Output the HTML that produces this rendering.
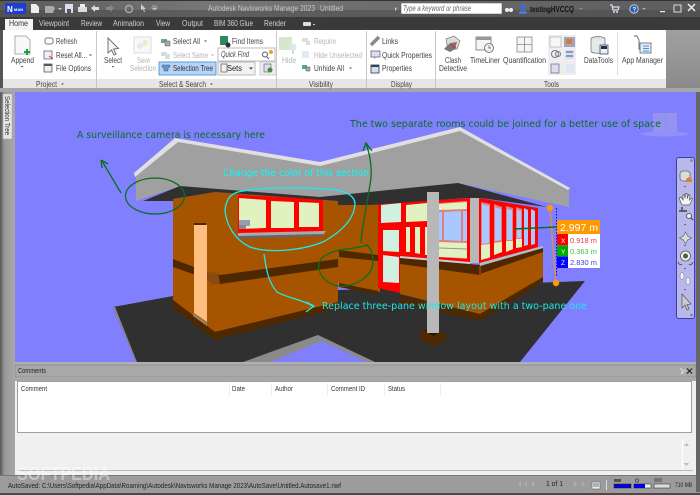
<!DOCTYPE html>
<html><head><meta charset="utf-8"><title>Navisworks</title>
<style>
html,body{margin:0;padding:0;width:700px;height:495px;overflow:hidden;background:#999}
svg{display:block;filter:blur(.3px)}
text{font-family:"Liberation Sans",sans-serif;font-size:8px;fill:#333}
.t{fill:#444}
.g{fill:#b4b4b4}
.a{font-family:"DejaVu Sans",sans-serif;font-size:10px}
.h{fill:#d0d0d0}
</style></head><body>
<svg width="700" height="495" viewBox="0 0 700 495" xmlns="http://www.w3.org/2000/svg">
<defs>
<linearGradient id="tb2" x1="0" y1="0" x2="1" y2="0"><stop offset="0" stop-color="#5a5a5a"/><stop offset=".3" stop-color="#777"/><stop offset="1" stop-color="#5c5c5c"/></linearGradient>
<linearGradient id="lf" x1="0" y1="0" x2="1" y2="0"><stop offset="0" stop-color="#555"/><stop offset=".3" stop-color="#999"/><stop offset="1" stop-color="#a8a8a8"/></linearGradient>
<linearGradient id="rt" x1="0" y1="0" x2="0" y2="1"><stop offset="0" stop-color="#a0a0a0"/><stop offset="1" stop-color="#8a8a8a"/></linearGradient>
</defs>

<!-- chrome -->
<rect width="700" height="495" fill="#9c9c9c"/>
<rect width="700" height="18" fill="url(#tb2)"/>
<rect y="10" width="700" height="8" fill="#4a4a4a" opacity=".55"/>
<rect y="17" width="700" height="13" fill="#3a3a3a"/>
<rect x="0" y="0" width="700" height="1" fill="#333"/>

<!-- app button -->
<rect x="5" y="3" width="21" height="11" fill="#1c3fd0"/>
<text x="7" y="12" style="font-size:8px;font-weight:bold;fill:#fff">N</text>
<text x="14" y="11" style="font-size:4px;font-weight:bold;fill:#fff">MAN</text>
<!-- QAT -->
<path d="M31 4h5l3 3v6h-8z" fill="#eee"/>
<path d="M45 6h8l2 2-2 5h-8z" fill="#aaa"/>
<path d="M58 8l2 2 2-2z" fill="#ccc"/>
<rect x="65" y="4" width="8" height="9" fill="#dde"/><rect x="67" y="9" width="4" height="4" fill="#556"/>
<rect x="78" y="7" width="9" height="5" fill="#ddd"/><rect x="80" y="4" width="5" height="3" fill="#eee"/>
<path d="M91 8l4-3v2h4v3h-4v2z" fill="#ddd"/>
<path d="M114 8l-4-3v2h-4v3h4v2z" fill="#888"/>
<circle cx="129" cy="9" r="3.5" fill="none" stroke="#aaa" stroke-width="1.4"/>
<path d="M141 4l5 5-2 0 1 3-1 0-1-3-2 1z" fill="#ccc"/>
<path d="M152 6h5M152 8l2.5 2 2.5-2z" stroke="#bbb" fill="#bbb" stroke-width=".8"/>
<text x="208" y="11" style="fill:#c6c6c6" textLength="107" lengthAdjust="spacingAndGlyphs">Autodesk Navisworks Manage 2023</text>
<text x="320" y="11" style="fill:#c6c6c6" textLength="23" lengthAdjust="spacingAndGlyphs">Untitled</text>
<path d="M395 7l2 2-2 2z" fill="#ccc"/>
<rect x="401" y="3" width="101" height="11" fill="#fff" stroke="#555" stroke-width=".5"/>
<text x="403" y="11" style="font-style:italic;fill:#666" textLength="68" lengthAdjust="spacingAndGlyphs">Type a keyword or phrase</text>
<circle cx="507" cy="10" r="2" fill="#eee"/><circle cx="511" cy="10" r="2" fill="#eee"/>
<circle cx="523" cy="6.5" r="2.5" fill="#3c6cdc"/><path d="M519 13c0-4 8-4 8 0z" fill="#3c6cdc"/><rect x="519" y="12.5" width="8" height="1" fill="#6a90e0"/>
<text x="530" y="12" style="fill:#111;font-weight:bold" textLength="44" lengthAdjust="spacingAndGlyphs">testingHVCCQ</text>
<path d="M579 8l2 2 2-2z" fill="#888"/>
<path d="M610 5h2l1 5h5l1-3h-6" fill="none" stroke="#dde" stroke-width="1.2"/><circle cx="614" cy="12" r="1" fill="#dde"/><circle cx="617" cy="12" r="1" fill="#dde"/>
<circle cx="634" cy="9" r="4.2" fill="#2a5cb8" stroke="#ddd" stroke-width=".8"/><text x="632.5" y="11.5" style="font-size:6px;font-weight:bold;fill:#fff">?</text>
<path d="M642 8l2 2 2-2z" fill="#aaa"/>
<rect x="660" y="11" width="5" height="1.2" fill="#eee"/>
<rect x="674" y="5" width="7" height="7" fill="none" stroke="#ddd" stroke-width="1"/>
<path d="M688 4l7 7M695 4l-7 7" stroke="#eee" stroke-width="1.5"/>

<!-- tabs -->
<path d="M5 30v-11h28v11z" fill="#f4f4f4"/>
<text x="9" y="26" textLength="19" lengthAdjust="spacingAndGlyphs">Home</text>
<text x="39" y="26" class="h" textLength="30" lengthAdjust="spacingAndGlyphs">Viewpoint</text>
<text x="81" y="26" class="h" textLength="21" lengthAdjust="spacingAndGlyphs">Review</text>
<text x="113" y="26" class="h" textLength="31" lengthAdjust="spacingAndGlyphs">Animation</text>
<text x="156" y="26" class="h" textLength="14" lengthAdjust="spacingAndGlyphs">View</text>
<text x="182" y="26" class="h" textLength="21" lengthAdjust="spacingAndGlyphs">Output</text>
<text x="214" y="26" class="h" textLength="39" lengthAdjust="spacingAndGlyphs">BIM 360 Glue</text>
<text x="264" y="26" class="h" textLength="22" lengthAdjust="spacingAndGlyphs">Render</text>
<rect x="303" y="22" width="8" height="4" rx="1" fill="#ddd"/><rect x="313" y="24" width="2" height="1" fill="#ccc"/>

<!-- ribbon -->
<rect x="2" y="30" width="664" height="50" fill="#fff"/>
<rect x="2" y="79" width="664" height="9" fill="#e6e6e6"/>
<rect x="666" y="30" width="34" height="58" fill="url(#rt)"/>
<rect x="0" y="30" width="3" height="62" fill="#555"/>
<rect x="0" y="88" width="700" height="4" fill="#a6a6a6"/>
<g fill="#c8c8c8"><rect x="96" y="31" width="1" height="57"/><rect x="276" y="31" width="1" height="57"/><rect x="366" y="31" width="1" height="57"/><rect x="435" y="31" width="1" height="57"/></g>

<!-- Project group -->
<path d="M15 36h11l4 4v14H15z" fill="#f8f8f8" stroke="#999" stroke-width=".8"/>
<path d="M26 49h2v2h2v2h-2v2h-2v-2h-2v-2h2z" fill="#18a030"/>
<text x="11" y="63" class="t" textLength="23" lengthAdjust="spacingAndGlyphs">Append</text>
<path d="M20.5 66l1.5 1.5 1.5-1.5z" fill="#555"/>
<rect x="45" y="38" width="8" height="6" rx="2" fill="none" stroke="#778" stroke-width="1"/>
<text x="56" y="44" class="t" textLength="21" lengthAdjust="spacingAndGlyphs">Refresh</text>
<rect x="44" y="51" width="8" height="8" fill="#eef" stroke="#667" stroke-width=".8"/><path d="M49 56l4 3" stroke="#c33"/>
<text x="56" y="58" class="t" textLength="31" lengthAdjust="spacingAndGlyphs">Reset All...</text>
<path d="M89 54.5l1.5 1.5 1.5-1.5z" fill="#555"/>
<rect x="44" y="64" width="8" height="8" fill="#eee" stroke="#556" stroke-width=".8"/><rect x="44" y="64" width="8" height="2" fill="#556"/>
<text x="56" y="71" class="t" textLength="35" lengthAdjust="spacingAndGlyphs">File Options</text>
<text x="36" y="87" class="t" textLength="21" lengthAdjust="spacingAndGlyphs">Project</text>
<path d="M61 83.5l1.5 1.5 1.5-1.5z" fill="#555"/>

<!-- Select & Search -->
<path d="M108 38l0 15 3.5-3 2.5 5 2-1-2.5-5 5-.5z" fill="#f5f5f5" stroke="#667" stroke-width=".9"/>
<text x="104" y="63" class="t" textLength="18" lengthAdjust="spacingAndGlyphs">Select</text>
<path d="M111.5 66l1.5 1.5 1.5-1.5z" fill="#555"/>
<rect x="134" y="37" width="17" height="16" fill="#f8f8f8" stroke="#ddd"/><circle cx="145" cy="43" r="3" fill="#f5e8c8"/><circle cx="140" cy="46" r="3" fill="#e8e8e8"/>
<text x="137" y="63" class="g" textLength="13" lengthAdjust="spacingAndGlyphs">Save</text>
<text x="130" y="71" class="g" textLength="26" lengthAdjust="spacingAndGlyphs">Selection</text>
<path d="M161 39h6v4h-6z" fill="#6a8"/><path d="M165 41h5v5h-5z" fill="#aaa" stroke="#555" stroke-width=".5"/>
<text x="173" y="44" class="t" textLength="27" lengthAdjust="spacingAndGlyphs">Select All</text>
<path d="M204 40.5l1.5 1.5 1.5-1.5z" fill="#555"/>
<path d="M161 52h6v4h-6z" fill="#cdd"/><path d="M165 54h5v5h-5z" fill="#ddd"/>
<text x="173" y="58" class="g" textLength="35" lengthAdjust="spacingAndGlyphs">Select Same</text>
<path d="M211 54.5l1.5 1.5 1.5-1.5z" fill="#aaa"/>
<rect x="159" y="62" width="57" height="13" fill="#b8d4f2" stroke="#5a9ce0"/>
<path d="M162 65h8v2l-2 1v3h-4v-3l-2-1z" fill="#5f9ad0" stroke="#346" stroke-width=".4"/>
<text x="173" y="71" style="fill:#234" textLength="40" lengthAdjust="spacingAndGlyphs">Selection Tree</text>
<rect x="220" y="36" width="8" height="9" fill="#2d8a5a"/><circle cx="228" cy="45" r="2.5" fill="#234"/>
<text x="232" y="44" class="t" textLength="31" lengthAdjust="spacingAndGlyphs">Find Items</text>
<rect x="218" y="48" width="57" height="13" fill="#fff" stroke="#bbb"/>
<text x="221" y="57" style="font-style:italic;fill:#444" textLength="28" lengthAdjust="spacingAndGlyphs">Quick Find</text>
<circle cx="265" cy="54.5" r="2.5" fill="none" stroke="#556"/><path d="M267 57l2 2" stroke="#556"/><circle cx="271" cy="52" r="2" fill="#f0a020"/>
<rect x="218" y="62" width="37" height="13" fill="#f2f2f2" stroke="#bbb"/>
<rect x="221" y="64" width="6" height="8" fill="none" stroke="#555" stroke-width=".7"/>
<text x="227" y="71" style="fill:#222" textLength="15" lengthAdjust="spacingAndGlyphs">Sets</text>
<path d="M249 67.5l2 2 2-2z" fill="#333"/>
<rect x="260" y="62" width="16" height="13" fill="#eee" stroke="#ccc"/>
<rect x="264" y="64" width="7" height="8" fill="#dde" stroke="#556" stroke-width=".6"/><circle cx="270" cy="70" r="2.5" fill="#4a8c3f"/>
<text x="159" y="87" class="t" textLength="47" lengthAdjust="spacingAndGlyphs">Select &amp; Search</text>
<path d="M210 83.5l1.5 1.5 1.5-1.5z" fill="#555"/>

<!-- Visibility -->
<rect x="279" y="37" width="13" height="13" fill="#d8e6cc"/><circle cx="293" cy="47" r="3.5" fill="#dde8f2"/><rect x="292" y="50" width="2" height="4" fill="#cdd"/>
<text x="282" y="63" class="g" textLength="14" lengthAdjust="spacingAndGlyphs">Hide</text>
<path d="M302 38h6v4h-6z" fill="#d6e4cc"/><path d="M306 41h4v4h-4z" fill="#ddd"/>
<text x="314" y="44" class="g" textLength="22" lengthAdjust="spacingAndGlyphs">Require</text>
<path d="M302 51h7v7h-7z" fill="#e0eaf4"/>
<text x="314" y="58" class="g" textLength="48" lengthAdjust="spacingAndGlyphs">Hide Unselected</text>
<path d="M302 65h5v4h-5z" fill="#5a8"/><path d="M306 67h4v4h-4z" fill="#aaa" stroke="#555" stroke-width=".5"/>
<text x="314" y="71" class="t" textLength="30" lengthAdjust="spacingAndGlyphs">Unhide All</text>
<path d="M349 67.5l1.5 1.5 1.5-1.5z" fill="#555"/>
<text x="309" y="87" class="t" textLength="24" lengthAdjust="spacingAndGlyphs">Visibility</text>

<!-- Display -->
<path d="M371 45l8-8" stroke="#8a8a8a" stroke-width="3.5"/>
<text x="382" y="44" class="t" textLength="16" lengthAdjust="spacingAndGlyphs">Links</text>
<rect x="371" y="51" width="9" height="6" fill="#dde" stroke="#667" stroke-width=".8"/><path d="M374 57v2l2-2" fill="#889"/>
<text x="382" y="58" class="t" textLength="50" lengthAdjust="spacingAndGlyphs">Quick Properties</text>
<rect x="371" y="65" width="8" height="8" fill="#cfe0f4" stroke="#334" stroke-width=".8"/><rect x="371" y="65" width="8" height="2" fill="#345"/>
<text x="382" y="71" class="t" textLength="30" lengthAdjust="spacingAndGlyphs">Properties</text>
<text x="391" y="87" class="t" textLength="21" lengthAdjust="spacingAndGlyphs">Display</text>

<!-- Tools -->
<path d="M446 39l8-3 6 5-3 8-9 1z" fill="#ddd" stroke="#777" stroke-width=".7"/>
<path d="M444 49l6-6 7-1-2 7-5 3z" fill="#777"/><path d="M451 45l5 3" stroke="#d33" stroke-width="1.5"/>
<text x="445" y="63" class="t" textLength="16" lengthAdjust="spacingAndGlyphs">Clash</text>
<text x="439" y="71" class="t" textLength="28" lengthAdjust="spacingAndGlyphs">Detective</text>
<rect x="476" y="37" width="15" height="13" fill="#f4f4f4" stroke="#777" stroke-width=".8"/><rect x="476" y="37" width="15" height="3" fill="#999"/>
<circle cx="489" cy="48" r="4.5" fill="#eee" stroke="#666" stroke-width=".8"/>
<path d="M489 45.5V48h2" stroke="#555" fill="none" stroke-width=".7"/>
<text x="470" y="63" class="t" textLength="30" lengthAdjust="spacingAndGlyphs">TimeLiner</text>
<rect x="517" y="37" width="15" height="15" fill="#f5f5f5" stroke="#888" stroke-width=".8"/><path d="M524.5 37v15M517 44.5h15" stroke="#888" stroke-width=".8"/>
<text x="503" y="63" class="t" textLength="43" lengthAdjust="spacingAndGlyphs">Quantification</text>
<rect x="548" y="35" width="28" height="40" fill="#eee"/>
<rect x="550" y="37" width="11" height="10" fill="#f6f6f6" stroke="#99a" stroke-width=".5"/><rect x="564" y="37" width="11" height="10" fill="#a4a4b8"/><rect x="566" y="39" width="6" height="5" fill="#d87a40"/>
<circle cx="555" cy="54" r="3.5" fill="none" stroke="#778"/><circle cx="558" cy="54" r="2.5" fill="none" stroke="#778"/>
<rect x="565" y="50" width="9" height="9" fill="#dde"/><path d="M566 52h7M566 56h7" stroke="#245ab0"/>
<rect x="551" y="64" width="8" height="9" fill="#dde" stroke="#667" stroke-width=".7"/><rect x="566" y="64" width="8" height="9" fill="#dfe8f2"/>
<ellipse cx="598" cy="39" rx="7" ry="2.5" fill="#ddd" stroke="#667" stroke-width=".7"/>
<path d="M591 39v12c0 3 14 3 14 0V39" fill="#e8e8e8" stroke="#667" stroke-width=".7"/>
<rect x="600" y="45" width="8" height="9" fill="#e8eef4" stroke="#234" stroke-width=".7"/><rect x="601" y="46" width="6" height="3" fill="#234"/>
<text x="584" y="63" class="t" textLength="29" lengthAdjust="spacingAndGlyphs">DataTools</text>
<rect x="617" y="32" width="1" height="43" fill="#ddd"/>
<path d="M634 36h3l2 4v9h11" fill="none" stroke="#667" stroke-width=".9"/>
<rect x="640" y="43" width="11" height="10" fill="#e4eef8" stroke="#567" stroke-width=".8"/>
<path d="M643 46h6M643 48.5h6M643 51h6" stroke="#2a6cc0" stroke-width=".8"/>
<text x="622" y="63" class="t" textLength="41" lengthAdjust="spacingAndGlyphs">App Manager</text>
<text x="544" y="87" class="t" textLength="15" lengthAdjust="spacingAndGlyphs">Tools</text>

<!-- side panel -->
<rect x="0" y="92" width="15" height="273" fill="url(#lf)"/>
<rect x="696" y="92" width="4" height="400" fill="#666"/>
<rect x="3" y="94" width="9" height="45" fill="#e4e4e4" stroke="#aaa" stroke-width=".5"/>
<text transform="translate(5,96) rotate(90)" style="font-size:7px;fill:#333" textLength="39" lengthAdjust="spacingAndGlyphs">Selection Tree</text>

<!-- viewport -->
<rect x="15" y="92" width="681" height="270" fill="#8080ff"/>

<!-- viewcube (sits beneath the annotation text) -->
<rect x="653" y="113" width="24" height="20" fill="#9494f0"/>
<rect x="665" y="113" width="1" height="20" fill="#8a8af8"/>
<ellipse cx="665" cy="134" rx="24" ry="2.5" fill="#9090f8"/>

<!-- floor -->
<polygon points="113,307 173,296 585,281 520,362 136,362" fill="#303030"/>
<polygon points="243,362 318,335 375,362" fill="#8a8a8a"/>
<polygon points="270,362 322,341 367,362" fill="#8080ff"/>
<polygon points="113,307 136,362 137,362 115,307" fill="#8a8a8a"/>

<!-- left building -->
<polygon points="173,199 215,192 338,201 338,302 215,332 173,300" fill="#a65400"/>
<polygon points="173,300 215,332 338,302 338,308 215,340 173,308" fill="#4d2800"/>
<polygon points="173,259 207,272 220,275 338,259 338,267 220,284 207,279 173,267" fill="#4d2800"/>
<polygon points="207,272 218,273 220,283 213,285 207,280" fill="#8a4a10"/>
<polygon points="194,223 206,223 206,226 194,226" fill="#4d2800"/>
<polygon points="194,225 207,225 207,322 194,313" fill="#ffbf80"/>
<polygon points="193,313 207,323 207,326 193,316" fill="#a08060"/>
<polygon points="238,195 323,199 323,231 238,233" fill="#f00"/>
<polygon points="239,198 266,200 266,228 239,229" fill="#e0f2bf"/>
<polygon points="271,201 294,202 294,228 271,228" fill="#e0f2bf"/>
<polygon points="299,202 319,203 319,227 299,227" fill="#e0f2bf"/>
<rect x="239" y="220" width="11" height="6" fill="#9a9ab0"/><rect x="239" y="225" width="7" height="4" fill="#888"/>
<polygon points="238,233 326,231 323,235 238,238" fill="#aaa"/>
<polygon points="238,236 323,234 323,236 238,239" fill="#666"/>

<!-- right wing wall -->
<polygon points="338,205 380,203 380,292 338,283" fill="#a65400"/>
<polygon points="339,250 378,255 378,261 339,257" fill="#4d2800"/>
<polygon points="339,283 378,291 378,295 339,287" fill="#4d2800"/>

<!-- right building lower -->
<polygon points="400,258 480,265 543,248 543,277 480,314 400,294" fill="#a65400"/>
<polygon points="400,296 480,314 543,277 543,282 480,321 400,303" fill="#4d2800"/>
<!-- glass frames -->
<polygon points="378,204 470,198 470,263 400,257 400,293 378,288" fill="#f00"/>
<polygon points="479,198 538,208 538,247 479,263" fill="#f00"/>
<polygon points="381,205 401,203 401,222 381,223" fill="#d0f0e0"/>
<polygon points="383,230 399,230 399,252 383,251" fill="#d0f0e0"/>
<polygon points="383,255 399,257 399,283 383,282" fill="#d0f0e0"/>
<polygon points="406,205 427,203 427,221 406,222" fill="#e0f2bf"/>
<polygon points="406,227 410,227 410,252 406,252" fill="#e0f2bf"/>
<polygon points="415,227 420,227 420,254 415,253" fill="#e0f2bf"/>
<polygon points="425,227 428,227 428,255 425,255" fill="#e0f2bf"/>
<polygon points="439,203 467,201 467,259 439,257" fill="#e08080"/>
<polygon points="439,204 467,202 467,209 439,210" fill="#e0f2bf"/>
<polygon points="444,212 461,211 461,241 444,240" fill="#a8c8ff"/>
<polygon points="439,212 442,212 442,240 439,240" fill="#a8c8ff"/>
<polygon points="463,211 467,211 467,241 463,241" fill="#a8c8ff"/>
<polygon points="439,242 467,243 467,258 439,257" fill="#e0f2bf"/>
<path d="M439 248l28 1" stroke="#999" stroke-width="1"/>
<!-- side panes -->
<polygon points="481,202 490,204 490,258 481,260" fill="#e08080"/>
<polygon points="482,204 489,206 489,243 482,244" fill="#a8c8ff"/>
<polygon points="481,245 490,244 490,257 481,260" fill="#e0f2bf"/>
<polygon points="494,204 502,207 502,252 494,255" fill="#e08080"/>
<polygon points="495,207 501,209 501,240 495,241" fill="#a8c8ff"/>
<polygon points="494,243 502,242 502,252 494,255" fill="#e0f2bf"/>
<polygon points="506,206 513,208 513,249 506,252" fill="#e08080"/>
<polygon points="507,209 512,210 512,240 507,240" fill="#a8c8ff"/>
<polygon points="506,241 513,241 513,249 506,252" fill="#e0f2bf"/>
<polygon points="516,207 522,209 522,247 516,248" fill="#e08080"/>
<polygon points="517,210 521,211 521,238 517,238" fill="#a8c8ff"/>
<polygon points="516,239 522,239 522,247 516,248" fill="#e0f2bf"/>
<polygon points="524,208 528,210 528,245 524,246" fill="#a8c8ff"/>
<polygon points="531,209 535,211 535,244 531,245" fill="#a8c8ff"/>
<!-- lower band -->
<polygon points="400,258 480,265 543,248 543,252 480,274 480,275 400,264" fill="#4d2800"/>
<polygon points="480,263 543,246 543,248 480,266" fill="#bbb"/>
<polygon points="400,256 470,262 470,264 400,258" fill="#ccc"/>
<polygon points="479,266 481,266 481,275 479,275" fill="#804010"/>

<!-- roof -->
<polygon points="136,176 177,141 320,165 460,130 569,190 569,207 458,183 320,197 180,186 136,201" fill="#a0a0a0"/>
<polygon points="134,173 175,138 320,162 460,127 570,188 568,190 460,131 320,166 178,142 135,177" fill="#e0e0e0"/>
<polygon points="143,201 180,186 320,197 458,183 547,207 480,198 467,198 370,205 338,205 338,201 215,192 173,199 173,201" fill="#303030"/>

<!-- columns -->
<polygon points="420,330 446,333 446,340 433,346 420,340" fill="#4d2800"/>
<polygon points="424,330 441,332 433,336" fill="#2a1500"/>
<rect x="427" y="192" width="12" height="141" fill="#b8b8b8"/>
<rect x="470" y="198" width="9" height="65" fill="#b8b8b8"/>

<!-- measurement -->
<path d="M550 208Q553 250 556 283" fill="none" stroke="#e09040" stroke-width="1.3"/>
<path d="M556.5 208V277" stroke="#00f" stroke-width="1" stroke-dasharray="1.5 1.5"/>
<path d="M514 229L557 227" stroke="#0a6e1e" stroke-width="1.5"/>
<circle cx="550" cy="208" r="3.2" fill="#f90"/>
<circle cx="556" cy="283" r="3.2" fill="#f90"/>
<rect x="557" y="220" width="43" height="14" fill="#f90"/>
<text x="560" y="231" style="font-size:10.5px;fill:#fff" textLength="38" lengthAdjust="spacingAndGlyphs">2.997 m</text>
<rect x="557" y="234" width="43" height="34" fill="#fff"/>
<rect x="557" y="234" width="11" height="11.3" fill="#f00"/>
<rect x="557" y="245.3" width="11" height="11.3" fill="#0a0"/>
<rect x="557" y="256.6" width="11" height="11.4" fill="#00f"/>
<text x="561" y="243" style="font-size:6.5px;fill:#fff">X</text>
<text x="561" y="254" style="font-size:6.5px;fill:#fff">Y</text>
<text x="561" y="265" style="font-size:6.5px;fill:#fff">Z</text>
<text x="570" y="243" style="font-size:7.5px;fill:#e04040" textLength="27" lengthAdjust="spacingAndGlyphs">0.918 m</text>
<text x="570" y="254" style="font-size:7.5px;fill:#40c040" textLength="27" lengthAdjust="spacingAndGlyphs">0.363 m</text>
<text x="570" y="265" style="font-size:7.5px;fill:#4040e0" textLength="27" lengthAdjust="spacingAndGlyphs">2.830 m</text>

<!-- annotations -->
<text x="77" y="138" class="a" style="fill:#0a6e1e" textLength="188" lengthAdjust="spacingAndGlyphs">A surveillance camera is necessary here</text>
<text x="350" y="127" class="a" style="fill:#0a6e1e" textLength="311" lengthAdjust="spacingAndGlyphs">The two separate rooms could be joined for a better use of space</text>
<text x="223" y="176" class="a" style="fill:#0ff" textLength="146" lengthAdjust="spacingAndGlyphs">Change the color of this section</text>
<text x="322" y="309" class="a" style="fill:#1ee8e8" textLength="265" lengthAdjust="spacingAndGlyphs">Replace three-pane window layout with a two-pane one</text>
<ellipse cx="155" cy="196" rx="29.5" ry="18" fill="none" stroke="#0a6e1e" stroke-width="1.3"/>
<path d="M121 193L102 161M101 160l1 8M101 160l7 4" fill="none" stroke="#0a6e1e" stroke-width="1.3"/>
<path d="M225 210C226 200 230 194 238 192C258 187 300 187 325 189C345 190 354 195 355 203C355 215 347 228 325 241C305 250 270 254 250 247C235 240 226 225 225 210Z" fill="none" stroke="#1ee8e8" stroke-width="1.3"/>
<path d="M264 254C266 268 268 282 277 292C285 297 300 299 313 306M306 302l8 4-8 6" fill="none" stroke="#1ee8e8" stroke-width="1.3"/>
<path d="M367 245C372 250 374 258 372 268C368 278 358 284 345 286C332 287 322 280 319 270C317 260 323 254 340 250C350 248 360 248 367 245Z" fill="none" stroke="#0a6e1e" stroke-width="1.3"/>
<path d="M361 243C362 225 368 200 371 178C372 165 369 152 366 143M363 151l3-8 6 8" fill="none" stroke="#0a6e1e" stroke-width="1.3"/>

<!-- nav bar -->
<rect x="676.5" y="157.5" width="18" height="161" rx="2.5" fill="#b8b8ec" stroke="#404090"/>
<circle cx="691.5" cy="160.5" r="1.5" fill="#889"/>
<circle cx="691.5" cy="315" r="1.5" fill="#889"/>
<rect x="680" y="171" width="10" height="10" rx="3" fill="#ddd" stroke="#666" stroke-width=".8"/>
<path d="M686 179l3-2 3 2v3h-6z" fill="#d9803a"/>
<path d="M684 186l1 1.5 1-1.5z" fill="#445"/>
<path d="M682 205l-3-7 2-1 2 3v-5l1.5-.5.5 4 .5-5 1.5 0 .5 5 1-4 1.5.5-.5 5 2-2 1 1-3 6z" fill="#f4f4f4" stroke="#555" stroke-width=".7"/>
<path d="M679 211h8M682 207v3" stroke="#444" stroke-width="1.5"/>
<circle cx="689" cy="216" r="2.5" fill="#eee" stroke="#444" stroke-width=".8"/><path d="M691 218l2 2" stroke="#333"/>
<path d="M684 224l1 1.5 1-1.5z" fill="#445"/>
<path d="M685.5 232l2 4 4 2-4 2-2 4-2-4-4-2 4-2z" fill="#ddd" stroke="#667" stroke-width=".7"/>
<path d="M684 245l1 1.5 1-1.5z" fill="#445"/>
<circle cx="685.5" cy="256" r="5" fill="#f0f0f0" stroke="#556" stroke-width=".8"/>
<circle cx="685.5" cy="256" r="2.5" fill="#3a6a3a"/>
<path d="M678 262c1 3 3 3 4 2M693 262c-1 3-3 3-4 2" fill="none" stroke="#556"/>
<path d="M684 268l1 1.5 1-1.5z" fill="#445"/>
<ellipse cx="682" cy="276" rx="2" ry="3.5" fill="#f4f4f4" stroke="#667" stroke-width=".5"/>
<ellipse cx="688" cy="281" rx="2" ry="3.5" fill="#f4f4f4" stroke="#667" stroke-width=".5"/>
<path d="M684 289l1 1.5 1-1.5z" fill="#445"/>
<path d="M682 294v14l3-3 2 5 2-1-2-4.5 4-.5z" fill="#ccc" stroke="#555" stroke-width=".7"/>

<!-- bottom -->
<rect x="15" y="362" width="681" height="3" fill="#b0b0b0"/>
<rect x="15" y="365" width="681" height="12" fill="#a8a8a8" stroke="#777" stroke-width=".5"/>
<text x="18" y="373" style="fill:#222;font-size:7.5px" textLength="28" lengthAdjust="spacingAndGlyphs">Comments</text>
<rect x="15" y="377" width="681" height="99" fill="#f0f0f0"/>
<rect x="15" y="377" width="681" height="4" fill="#a8a8a8"/>
<rect x="17.5" y="381.5" width="674" height="51" fill="#fff" stroke="#a0a0a0"/>
<g fill="#eee"><rect x="229" y="383" width="1" height="13"/><rect x="271" y="383" width="1" height="13"/><rect x="327" y="383" width="1" height="13"/><rect x="384" y="383" width="1" height="13"/><rect x="440" y="383" width="1" height="13"/></g>
<text x="21" y="391" style="font-size:7.5px" textLength="26" lengthAdjust="spacingAndGlyphs">Comment</text>
<text x="232" y="391" style="font-size:7.5px" textLength="13" lengthAdjust="spacingAndGlyphs">Date</text>
<text x="275" y="391" style="font-size:7.5px" textLength="18" lengthAdjust="spacingAndGlyphs">Author</text>
<text x="331" y="391" style="font-size:7.5px" textLength="34" lengthAdjust="spacingAndGlyphs">Comment ID</text>
<text x="388" y="391" style="font-size:7.5px" textLength="17" lengthAdjust="spacingAndGlyphs">Status</text>
<rect x="18" y="470" width="675" height="1" fill="#b8b8b8"/>
<rect x="682" y="439" width="1" height="31" fill="#fff"/>
<path d="M684 446l2.5-3 2.5 3zM684 463l2.5 3 2.5-3z" fill="#bbb"/>
<path d="M680 368l3 3-2 3 3-2M684 370l2 1" stroke="#ddd" fill="none"/>
<path d="M687 368.5l5 5M692 368.5l-5 5" stroke="#222" stroke-width="1.2"/>

<!-- status -->
<rect x="0" y="365" width="15" height="128" fill="url(#lf)"/>
<rect x="0" y="476" width="696" height="17" fill="#9c9c9c"/>
<rect x="0" y="475" width="696" height="1" fill="#777"/>
<rect x="0" y="493" width="700" height="2" fill="#4a4a4a"/>
<text x="8" y="488" style="font-size:7.5px;fill:#222" textLength="333" lengthAdjust="spacingAndGlyphs">AutoSaved: C:\Users\Softpedia\AppData\Roaming\Autodesk\Navisworks Manage 2023\AutoSave\Untitled.Autosave1.nwf</text>
<text x="17" y="480" style="font-size:18px;font-weight:bold;fill:#fff;opacity:.4" textLength="93" lengthAdjust="spacingAndGlyphs">SOFTPEDIA</text>
<text x="546" y="486" style="font-size:7.5px;fill:#222" textLength="17" lengthAdjust="spacingAndGlyphs">1 of 1</text>
<path d="M521 481v6l-3-3zM527 481v6l-3-3zM534 481v6l-3-3zM574 481v6l3-3zM582 481v6l3-3z" fill="#b0b0b0"/>
<rect x="592" y="482" width="8" height="7" fill="#eee" stroke="#667" stroke-width=".6"/><path d="M593 484h6M593 486h6" stroke="#678"/>
<rect x="606" y="480" width="1" height="10" fill="#ddd"/>
<rect x="614" y="484" width="17" height="4" fill="#00d" stroke="#222" stroke-width=".5"/>
<rect x="614" y="479" width="7" height="3" fill="#554"/>
<rect x="634" y="484" width="17" height="4" fill="#eee" stroke="#222" stroke-width=".5"/><rect x="634" y="484" width="11" height="4" fill="#00d"/>
<circle cx="637" cy="480.5" r="1.7" fill="none" stroke="#333" stroke-width=".7"/>
<rect x="654" y="484" width="16" height="4" fill="#ddd" stroke="#222" stroke-width=".5"/>
<path d="M654 479h8M654 481h8" stroke="#333" stroke-width=".8"/>
<text x="675" y="487" style="font-size:6px;fill:#222" textLength="17" lengthAdjust="spacingAndGlyphs">710 MB</text>
</svg>
</body></html>
